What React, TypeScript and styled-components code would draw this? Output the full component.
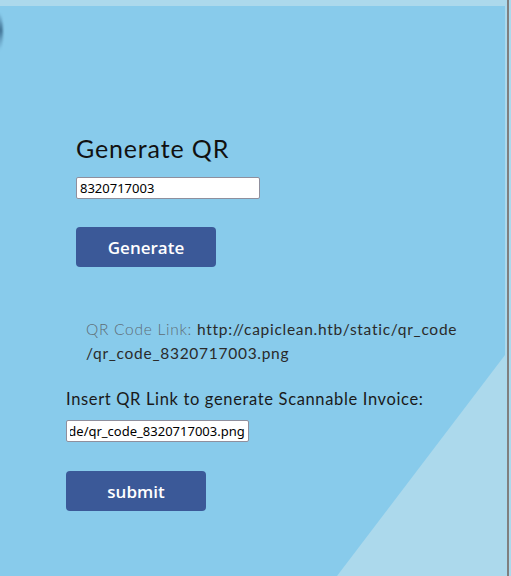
import React, { useEffect, useRef, useState } from 'react';
import styled, { createGlobalStyle } from 'styled-components';

const GlobalStyle = createGlobalStyle`
  html, body {
    margin: 0;
    padding: 0;
    background: #acd9ec;
    overflow: hidden;
  }
`;

const Frame = styled.div`
  width: 509px;
  height: 576px;
  border-right: 2px solid #7f7f7f;
  padding-top: 6px;
  box-sizing: border-box;
  position: relative;
`;

const Panel = styled.main`
  width: 505px;
  height: 570px;
  background: #88cbeb;
  clip-path: polygon(0 0, 100% 0, 100% 349px, 337px 100%, 0 100%);
  padding-top: 127px;
  box-sizing: border-box;
`;

const Blob = styled.div`
  position: absolute;
  left: -8px;
  top: 12px;
  width: 11px;
  height: 40px;
  border-radius: 50%;
  background: radial-gradient(ellipse at 80% 45%, #3a6a8c 0%, rgba(70, 120, 155, 0.5) 32%, rgba(136, 203, 235, 0) 68%);
  filter: blur(1px);
  z-index: 1;
`;

const Section = styled.section<{ $indent: number }>`
  padding-left: ${({ $indent }) => $indent}px;
  display: flex;
  flex-direction: column;
  align-items: flex-start;
`;

const Title = styled.h1`
  margin: 0 0 14px;
  font-family: 'Lato', 'Open Sans', sans-serif;
  font-weight: 400;
  font-size: 25px;
  line-height: 30px;
  color: #111;
  letter-spacing: 0.85px;
`;

const Field = styled.input<{ $width: number }>`
  width: ${({ $width }) => $width}px;
  height: 22px;
  box-sizing: border-box;
  border: 1px solid #8f8f9d;
  border-radius: 2px;
  background: #fff;
  padding: 0 3px;
  font-family: 'Noto Sans', 'Open Sans', sans-serif;
  font-size: 13px;
  color: #000;
  outline: none;
`;

const ActionButton = styled.button<{ $top: number }>`
  margin-top: ${({ $top }) => $top}px;
  width: 140px;
  height: 40px;
  border: none;
  border-radius: 4px;
  background: #3b5998;
  color: #fff;
  font-family: 'Open Sans', 'Noto Sans', sans-serif;
  font-weight: 600;
  font-size: 17px;
  cursor: pointer;
`;

const LinkText = styled.p`
  margin: 50px 0 0;
  padding-left: 20px;
  width: 400px;
  font-family: 'Lato', 'Open Sans', sans-serif;
  font-weight: 400;
  font-size: 15.5px;
  line-height: 24px;
  color: #2a2a2a;
  letter-spacing: 0.72px;
`;

const Muted = styled.span`
  color: #5f6d76;
  font-weight: 300;
`;

const Label = styled.label`
  margin: 23px 0 10px;
  font-family: 'Lato', 'Open Sans', sans-serif;
  font-size: 16.5px;
  line-height: 22px;
  color: #1a1a1a;
  letter-spacing: 0.65px;
`;

const App: React.FC = () => {
  const [code, setCode] = useState('8320717003');
  const [link, setLink] = useState('http://capiclean.htb/static/qr_code/qr_code_8320717003.png');
  const linkRef = useRef<HTMLInputElement>(null);

  useEffect(() => {
    if (linkRef.current) {
      linkRef.current.scrollLeft = linkRef.current.scrollWidth;
    }
  }, []);

  return (
    <>
      <GlobalStyle />
      <Frame>
        <Blob />
        <Panel>
          <Section $indent={76}>
            <Title>Generate QR</Title>
            <Field $width={184} value={code} onChange={(e) => setCode(e.target.value)} />
            <ActionButton $top={28}>Generate</ActionButton>
          </Section>
          <Section $indent={66}>
            <LinkText>
              <Muted>QR Code Link: </Muted>
              http://capiclean.htb/static/qr_code
              <br />
              /qr_code_8320717003.png
            </LinkText>
            <Label htmlFor="qrlink">Insert QR Link to generate Scannable Invoice:</Label>
            <Field id="qrlink" ref={linkRef} $width={183} value={link} onChange={(e) => setLink(e.target.value)} />
            <ActionButton $top={29}>submit</ActionButton>
          </Section>
        </Panel>
      </Frame>
    </>
  );
};

export default App;
